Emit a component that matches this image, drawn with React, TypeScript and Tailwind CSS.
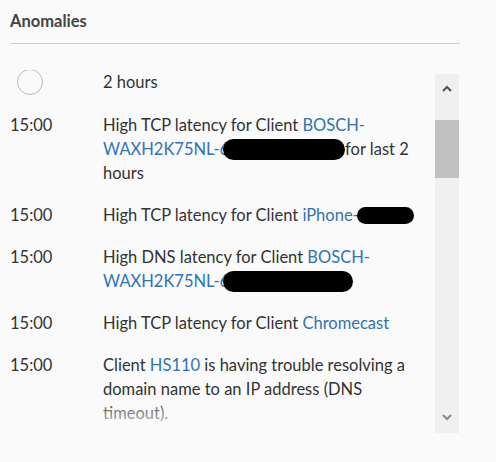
import React from 'react';

type Item = { time?: string; body: React.ReactNode; circle?: boolean };

const Link = ({ children }: { children: React.ReactNode }) => (
  <span className="text-[#2f73b3]">{children}</span>
);

const Blob = ({ className }: { className: string }) => (
  <span className={`inline-block bg-black rounded-full align-middle ${className}`} />
);

const items: Item[] = [
  { circle: true, body: '2 hours' },
  {
    time: '15:00',
    body: (
      <>
        High TCP latency for Client <Link>BOSCH-WAXH2K75NL-6</Link>
        <Blob className="w-[122px] h-[21px] -ml-[6px] -mt-[2px]" />
        for last 2 hours
      </>
    ),
  },
  {
    time: '15:00',
    body: (
      <>
        High TCP latency for Client <Link>iPhone-</Link>
        <Blob className="w-[57px] h-[17px] -ml-[2px] -mt-[2px]" />
      </>
    ),
  },
  {
    time: '15:00',
    body: (
      <>
        High DNS latency for Client <Link>BOSCH-WAXH2K75NL-6</Link>
        <Blob className="w-[130px] h-[21px] -ml-[6px] -mt-[2px]" />
      </>
    ),
  },
  {
    time: '15:00',
    body: (
      <>
        High TCP latency for Client <Link>Chromecast</Link>
      </>
    ),
  },
  {
    time: '15:00',
    body: (
      <>
        Client <Link>HS110</Link> is having trouble resolving a domain name to an IP address (DNS timeout).
      </>
    ),
  },
];

export default function App() {
  return (
    <div
      className="w-[496px] h-[462px] bg-[#fafafa] text-[#333] overflow-hidden"
      style={{ fontFamily: 'Lato, "Open Sans", sans-serif' }}
    >
      {/* Header */}
      <div className="pl-[10px] pt-[11px] w-[460px]">
        <h2 className="text-[16.5px] font-bold text-[#444] leading-[20px]">Anomalies</h2>
        <div className="mt-[12px] border-t border-[#cfcfcf]" />
      </div>

      {/* List + scrollbar */}
      <div className="flex mt-[26px] h-[363px]">
        <div className="relative w-[435px] pl-[10px] overflow-hidden">
          <div className="flex flex-col gap-[18px] text-[16.5px] leading-[24px]">
            {items.map((it, i) => (
              <div key={i} className="flex">
                <div className="w-[93px] shrink-0">
                  {it.circle ? (
                    <div className="ml-[7px] mt-[-1px] w-[26px] h-[26px] rounded-full border-[1.5px] border-[#b9b9b9]" />
                  ) : (
                    it.time
                  )}
                </div>
                <div className="w-[320px]">{it.body}</div>
              </div>
            ))}
          </div>
          <div className="absolute left-0 right-0 bottom-0 h-[36px] bg-gradient-to-b from-[#fafafa]/0 to-[#fafafa]/90" />
        </div>

        {/* Scrollbar */}
        <div className="mt-[4px] w-[24px] h-[359px] bg-[#f0f0f0] flex flex-col items-center">
          <div className="h-[28px] flex items-center justify-center">
            <svg width="10" height="7" viewBox="0 0 10 7">
              <path d="M1 6 L5 2 L9 6" fill="none" stroke="#505050" strokeWidth="2" />
            </svg>
          </div>
          <div className="mt-[18px] w-full h-[58px] bg-[#c1c1c1]" />
          <div className="flex-1" />
          <div className="h-[24px] mb-[4px] flex items-center justify-center">
            <svg width="10" height="7" viewBox="0 0 10 7">
              <path d="M1 1 L5 5 L9 1" fill="none" stroke="#8a8a8a" strokeWidth="2" />
            </svg>
          </div>
        </div>
      </div>
    </div>
  );
}
